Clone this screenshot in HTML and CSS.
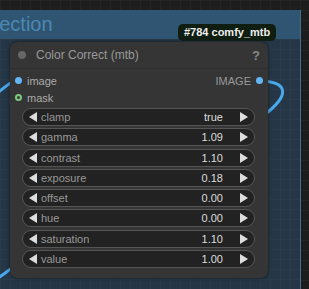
FILE: index.html
```html
<!DOCTYPE html>
<html lang="en">
<head>
    <meta charset="UTF-8">
    <title>Color Correct (mtb)</title>
    <link rel="stylesheet" href="styles.css">
</head>
<body>

    <div class="canvas">

        <!-- Group -->
        <div class="group">
            <div class="group-title">Color Correction</div>
            <div class="group-body"></div>
        </div>

        <!-- Links -->
        <svg class="links" width="309" height="289" viewBox="0 0 309 289">
            <path d="M-4 94 C4 88 8 84 14 81" />
            <path d="M262 81 C284 82 292 92 268 112" />
            <path d="M-4 279 C2 276 6 272 12 268" />
        </svg>

        <!-- Node -->
        <div class="node">
            <div class="node-title">
                <span class="title-dot"></span>
                <span class="title-text">Color Correct (mtb)</span>
                <span class="help">?</span>
            </div>

            <div class="slots">
                <div class="slot-row">
                    <div class="slot"><span class="dot dot-image"></span>image</div>
                    <div class="slot out">IMAGE<span class="dot dot-image"></span></div>
                </div>
                <div class="slot-row">
                    <div class="slot"><span class="dot dot-mask"></span>mask</div>
                </div>
            </div>

            <div class="widgets">
                <div class="widget"><span class="arrow left"></span><span class="label">clamp</span><span class="value">true</span><span class="arrow right"></span></div>
                <div class="widget"><span class="arrow left"></span><span class="label">gamma</span><span class="value">1.09</span><span class="arrow right"></span></div>
                <div class="widget"><span class="arrow left"></span><span class="label">contrast</span><span class="value">1.10</span><span class="arrow right"></span></div>
                <div class="widget"><span class="arrow left"></span><span class="label">exposure</span><span class="value">0.18</span><span class="arrow right"></span></div>
                <div class="widget"><span class="arrow left"></span><span class="label">offset</span><span class="value">0.00</span><span class="arrow right"></span></div>
                <div class="widget"><span class="arrow left"></span><span class="label">hue</span><span class="value">0.00</span><span class="arrow right"></span></div>
                <div class="widget"><span class="arrow left"></span><span class="label">saturation</span><span class="value">1.10</span><span class="arrow right"></span></div>
                <div class="widget"><span class="arrow left"></span><span class="label">value</span><span class="value">1.00</span><span class="arrow right"></span></div>
            </div>
        </div>

        <div class="badge">#784 comfy_mtb</div>
    </div>

</body>
</html>
```

FILE: styles.css
```css
* {
    margin: 0;
    padding: 0;
    box-sizing: border-box;
}

body {
    font-family: "Liberation Sans", Arial, sans-serif;
    background-color: #1d1d1d;
    background-image:
        linear-gradient(#242424 1px, transparent 1px),
        linear-gradient(90deg, #242424 1px, transparent 1px);
    background-size: 10px 10px;
    width: 309px;
    height: 289px;
    overflow: hidden;
}

.canvas {
    position: relative;
    width: 309px;
    height: 289px;
    overflow: hidden;
}

/* Group */
.group {
    position: absolute;
    left: -120px;
    top: 10px;
    width: 421px;
    height: 279px;
    display: flex;
    flex-direction: column;
    border-right: 1px solid #3f6f90;
}

.group-title {
    height: 29px;
    background: #2f5572;
    color: #4b88b3;
    font-size: 20px;
    line-height: 29px;
    padding-left: 27px;
    white-space: nowrap;
}

.group-body {
    flex-grow: 1;
    background-color: #253646;
    background-image:
        linear-gradient(#2a3b4b 1px, transparent 1px),
        linear-gradient(90deg, #2a3b4b 1px, transparent 1px);
    background-size: 10px 10px;
}

/* Links */
.links {
    position: absolute;
    left: 0;
    top: 0;
}

.links path {
    fill: none;
    stroke: #4aa8ec;
    stroke-width: 3;
    stroke-linecap: round;
}

/* Node */
.node {
    position: absolute;
    left: 10px;
    top: 42px;
    width: 258px;
    height: 236px;
    background: #353535;
    border-radius: 8px;
    box-shadow: 0 0 4px rgba(0, 0, 0, 0.5);
    display: flex;
    flex-direction: column;
}

.node-title {
    height: 27px;
    display: flex;
    align-items: center;
    padding: 0 8px 0 8px;
    border-bottom: 1px solid #2e2e2e;
    color: #999;
    font-size: 12px;
}

.title-dot {
    width: 8px;
    height: 8px;
    border-radius: 50%;
    background: #666;
    margin-right: 10px;
}

.title-text {
    flex-grow: 1;
}

.help {
    color: #888;
    font-weight: bold;
    font-size: 13px;
}

.slots {
    padding-top: 3px;
    display: flex;
    flex-direction: column;
}

.slot-row {
    height: 17px;
    display: flex;
    justify-content: space-between;
    align-items: center;
}

.slot {
    display: flex;
    align-items: center;
    color: #aaa;
    font-size: 11px;
}

.slot .dot {
    width: 7px;
    height: 7px;
    border-radius: 50%;
    margin: 0 5px 0 5px;
}

.slot.out {
    color: #999;
}

.dot-image {
    background: #64b5f6;
}

.dot-mask {
    background: #2b3f2b;
    border: 2px solid #81c784;
}

/* Widgets */
.widgets {
    margin: 2px 13px 0 12px;
    display: flex;
    flex-direction: column;
    gap: 2.3px;
}

.widget {
    height: 18px;
    background: #222;
    border: 1px solid #555;
    border-radius: 9px;
    display: flex;
    align-items: center;
    padding: 0 6px;
    font-size: 11px;
}

.arrow {
    width: 0;
    height: 0;
    border-top: 5px solid transparent;
    border-bottom: 5px solid transparent;
}

.arrow.left {
    border-right: 8px solid #ddd;
    margin-right: 4px;
}

.arrow.right {
    border-left: 8px solid #ddd;
    margin-left: 17px;
}

.label {
    color: #999;
    flex-grow: 1;
}

.value {
    color: #ddd;
}

/* Badge */
.badge {
    position: absolute;
    left: 178px;
    top: 24px;
    height: 17px;
    padding: 0 6px;
    background: #0f1e10;
    border-radius: 5px;
    color: #eee;
    font-size: 11px;
    font-weight: bold;
    line-height: 17px;
}
```
